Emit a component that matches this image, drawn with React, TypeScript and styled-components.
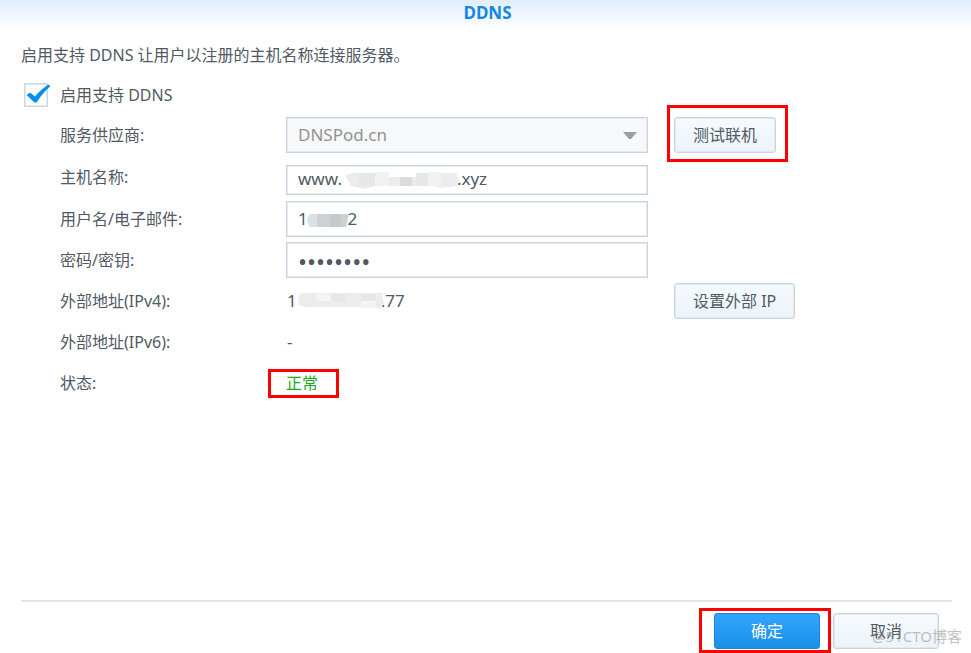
import React from "react";
import styled, { createGlobalStyle, css } from "styled-components";

const GlobalStyle = createGlobalStyle`
  * { box-sizing: border-box; }
  body {
    margin: 0;
    background: #fff;
    color: #505a64;
    font: 16px/24px "Noto Sans", "Noto Sans CJK SC", sans-serif;
  }
  button, input, select { font: inherit; color: inherit; }
`;

const Dialog = styled.div`
  position: relative;
  display: flex;
  flex-direction: column;
  min-height: 100vh;
  overflow: hidden;
`;

const TitleBar = styled.header`
  height: 30px;
  background: linear-gradient(#dfeefb, #fff);
  text-align: center;
`;

const Title = styled.h1`
  margin: 0;
  padding-left: 4px;
  font-size: 17px;
  line-height: 26px;
  color: #1287e6;
`;

const Content = styled.main`
  flex: 1;
  padding: 13px 21px 0;
`;

const Intro = styled.p`
  margin: 0;
`;

const EnableRow = styled.label`
  display: flex;
  align-items: center;
  gap: 10px;
  width: max-content;
  margin-top: 15px;
  padding-left: 3px;
`;

const CheckFrame = styled.span`
  position: relative;
  width: 26px;
  height: 26px;
`;

const Checkbox = styled.input`
  appearance: none;
  display: block;
  width: 24px;
  height: 24px;
  margin: 1px 0 0;
  border: 1px solid #cbd6e1;
  box-shadow: inset 0 0 0 1px #e2e9f0;
  background: #fff;
`;

const CheckMark = styled.svg`
  position: absolute;
  inset: 0;
  pointer-events: none;
`;

const Form = styled.form`
  padding: 6px 0 0 39px;
`;

const Row = styled.div<{ $tall?: boolean }>`
  display: grid;
  grid-template-columns: 226px minmax(0, 362px) auto;
  justify-content: start;
  align-items: center;
  height: ${(p) => (p.$tall ? 42 : 41)}px;
`;

const Field = styled.div<{ $low?: boolean }>`
  position: relative;
  ${(p) => p.$low && css`align-self: end; padding-bottom: 3px;`}
`;

const control = css`
  display: block;
  width: 100%;
  height: 36px;
  padding: 0 11px;
  border: 1px solid #c8d4e0;
  border-radius: 0;
  box-shadow: inset 0 0 0 1px #e4ebf1;
  background: #fff;
  font-size: 17px;
  outline: none;
`;

const TextInput = styled.input<{ $short?: boolean }>`
  ${control}
  ${(p) => p.$short && css`height: 30px; padding-bottom: 3px;`}
`;

const PasswordInput = styled.input`
  ${control}
  padding-top: 3px;
  font-size: 24px;
`;

const Select = styled.select`
  ${control}
  appearance: none;
  background: #f6f8fa;
  color: #929292;
`;

const Arrow = styled.svg`
  position: absolute;
  top: 15px;
  right: 11px;
  pointer-events: none;
`;

const Mosaic = styled.svg<{ $left: number; $top: number }>`
  position: absolute;
  left: ${(p) => p.$left}px;
  top: ${(p) => p.$top}px;
`;

const Value = styled.span`
  white-space: pre;
  padding-left: 1px;
  font-size: 17px;
`;

const Status = styled.span`
  color: #1caa1c;
`;

const marks = {
  test: "-12px -12px -9px -7px",
  status: "-2px -21px -3px -18px",
  confirm: "-5px -11px -4px -15px",
};

const Highlight = styled.span<{ $mark: keyof typeof marks }>`
  position: relative;
  display: inline-block;
  &::after {
    content: "";
    position: absolute;
    inset: ${(p) => marks[p.$mark]};
    border: 3px solid #f00;
    pointer-events: none;
  }
`;

const Action = styled.div`
  display: flex;
  margin-left: 26px;
`;

const Button = styled.button<{ $primary?: boolean; $wide?: boolean }>`
  display: block;
  height: 36px;
  min-width: ${(p) => (p.$wide ? 106 : 0)}px;
  padding: 0 18px;
  border: 1px solid #c8d4e0;
  border-radius: 3px;
  box-shadow: inset 0 0 0 1px #e2eaf1;
  background: linear-gradient(#f6faff, #edf3f8);
  white-space: nowrap;
  ${(p) => p.$primary && css`
    border-color: #1b86d8;
    box-shadow: none;
    background: linear-gradient(#34a5ff, #198fe8);
    color: #fff;
  `}
`;

const Footer = styled.footer`
  display: flex;
  justify-content: flex-end;
  gap: 13px;
  margin: 0 19px 0 21px;
  padding: 11px 13px 4px 0;
  border-top: 2px solid #e4e4e4;
`;

const Watermark = styled.span`
  position: absolute;
  right: 9px;
  bottom: 5px;
  font-size: 15px;
  color: rgba(130, 130, 130, 0.5);
  pointer-events: none;
`;

const blank = (count: number) => "\u00a0".repeat(count);

export default function App() {
  return (
    <>
      <GlobalStyle />
      <Dialog>
        <TitleBar>
          <Title>DDNS</Title>
        </TitleBar>
        <Content>
          <Intro>启用支持 DDNS 让用户以注册的主机名称连接服务器。</Intro>
          <EnableRow>
            <CheckFrame>
              <Checkbox type="checkbox" defaultChecked />
              <CheckMark width="26" height="26" viewBox="0 0 26 26">
                <path d="M2.500 13 6 10.500 11 14.500C15 9.500 19 6 24.500 2.500L26.500 4C20.500 9 17 14 12.500 20.500H10.500Z" fill="#068df0" />
              </CheckMark>
            </CheckFrame>
            启用支持 DDNS
          </EnableRow>
          <Form id="ddns" onSubmit={(e) => e.preventDefault()}>
            <Row $tall>
              <label htmlFor="provider">服务供应商:</label>
              <Field>
                <Select id="provider" defaultValue="DNSPod.cn">
                  <option>DNSPod.cn</option>
                </Select>
                <Arrow width="14" height="8" viewBox="0 0 14 8">
                  <path d="M0 0H14L8 7H6Z" fill="#96a0aa" />
                </Arrow>
              </Field>
              <Action>
                <Highlight $mark="test">
                  <Button type="button">测试联机</Button>
                </Highlight>
              </Action>
            </Row>
            <Row $tall>
              <label htmlFor="host">主机名称:</label>
              <Field $low>
                <TextInput id="host" $short defaultValue={`www.${blank(26)}.xyz`} />
                <Mosaic $left={58} $top={7} width="116" height="17" viewBox="0 0 116 17">
                  <path d="M1 3 8 1H112L115 8 112 14 98 16 90 14H32L20 17 7 14Z" fill="#ebeced" />
                  <path d="M15 1H31V14H15ZM72 1H84V14H72Z" fill="#e6e7e8" />
                  <path d="M31 0H45V14H31ZM84 0H97V14H84Z" fill="#f1f2f2" />
                  <path d="M45 0H72V5H45Z" fill="#fff" />
                  <path d="M56 5H68V14H56Z" fill="#dadbdc" />
                </Mosaic>
              </Field>
            </Row>
            <Row>
              <label htmlFor="user">用户名/电子邮件:</label>
              <Field>
                <TextInput id="user" defaultValue={`1${blank(9)}2`} />
                <Mosaic $left={21} $top={13} width="42" height="13" viewBox="0 0 42 13">
                  <path d="M3 0H42L39 13H3L0 6Z" fill="#cdd1d4" />
                  <path d="M3 0H10V13H3L0 6Z" fill="#dce0e2" />
                  <path d="M23 0H34V13H23Z" fill="#c6c9cc" />
                </Mosaic>
              </Field>
            </Row>
            <Row>
              <label htmlFor="secret">密码/密钥:</label>
              <Field>
                <PasswordInput id="secret" type="password" defaultValue="••••••••" />
              </Field>
            </Row>
            <Row>
              <span>外部地址(IPv4):</span>
              <Field>
                <Value>{`1${blank(19)}.77`}</Value>
                <Mosaic $left={12} $top={4} width="86" height="16" viewBox="0 0 86 16">
                  <path d="M1 2 4 0H84L86 11 82 16 76 14H8L0 12Z" fill="#ebeced" />
                  <path d="M18 1H33V8H18ZM63 8H78V15H63Z" fill="#f4f4f5" />
                  <path d="M33 1H48V8H33ZM63 1H78V8H63Z" fill="#e6e7e8" />
                </Mosaic>
              </Field>
              <Action>
                <Button type="button">设置外部 IP</Button>
              </Action>
            </Row>
            <Row>
              <span>外部地址(IPv6):</span>
              <Value>-</Value>
            </Row>
            <Row>
              <span>状态:</span>
              <Field>
                <Highlight $mark="status">
                  <Status>正常</Status>
                </Highlight>
              </Field>
            </Row>
          </Form>
        </Content>
        <Footer>
          <Highlight $mark="confirm">
            <Button type="submit" form="ddns" $primary $wide>确定</Button>
          </Highlight>
          <Button type="button" $wide>取消</Button>
        </Footer>
        <Watermark>@51CTO博客</Watermark>
      </Dialog>
    </>
  );
}
